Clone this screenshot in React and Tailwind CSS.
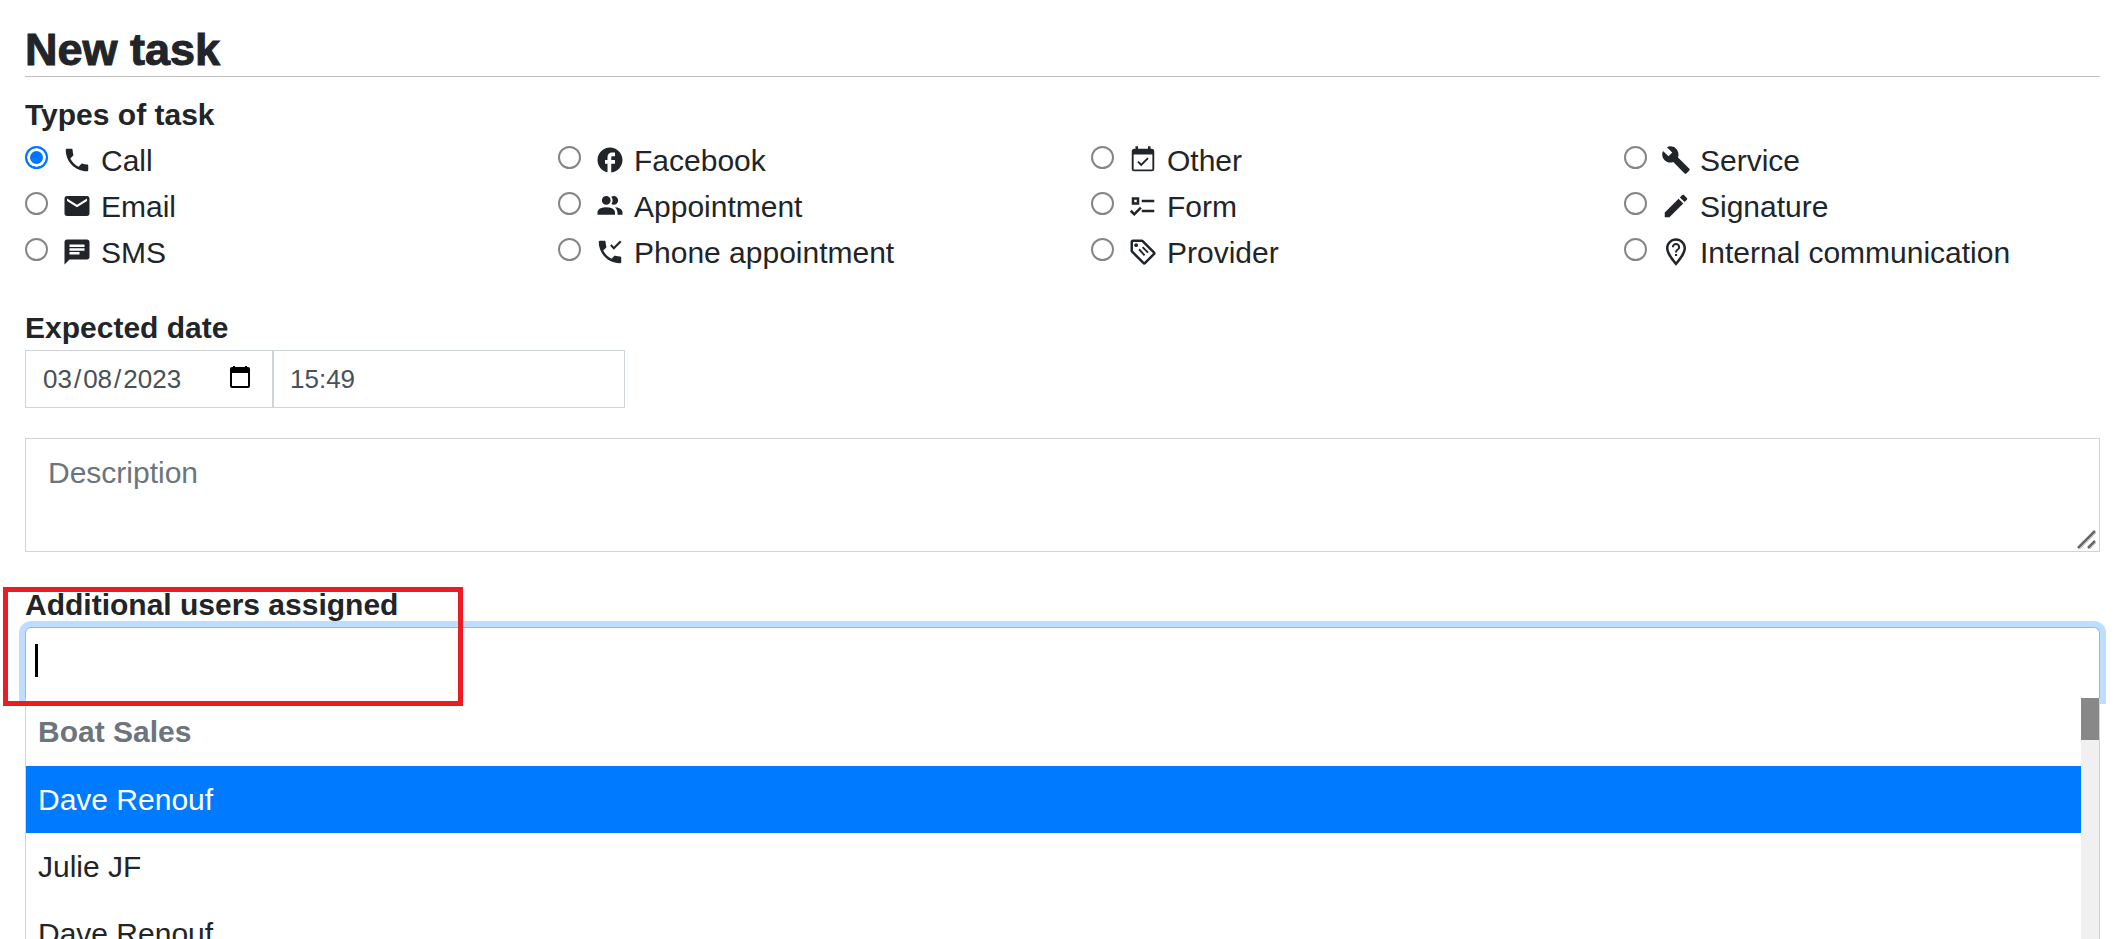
import { useState } from "react";
import { MdPhone, MdEmail, MdChat, MdFacebook, MdBuild, MdEdit } from "react-icons/md";

const Glyph = ({ children, ...rest }) => (
  <svg viewBox="0 0 24 24" fill="currentColor" aria-hidden="true" {...rest}>
    {children}
  </svg>
);

const PeopleIcon = (props) => (
  <Glyph {...props}>
    <path d="M16 17v2H2v-2s0-4 7-4 7 4 7 4m-3.500-9.500A3.500 3.500 0 1 0 9 11a3.500 3.500 0 0 0 3.500-3.500m3.440 5.500A5.320 5.320 0 0 1 18 17v2h4v-2s0-3.630-6.060-4M15 4a3.390 3.390 0 0 0-1.930.590 5 5 0 0 1 0 5.820A3.390 3.390 0 0 0 15 11a3.500 3.500 0 0 0 0-7z" />
  </Glyph>
);

const PhoneCheckIcon = (props) => (
  <Glyph {...props}>
    <path d="M20 15.500c-1.200 0-2.500-.2-3.600-.6h-.3c-.3 0-.5.1-.7.3l-2.200 2.200c-2.800-1.500-5.200-3.800-6.600-6.600l2.200-2.200c.3-.3.4-.7.2-1-.3-1.100-.5-2.400-.5-3.600 0-.5-.5-1-1-1H4c-.5 0-1 .5-1 1 0 9.400 7.600 17 17 17 .5 0 1-.5 1-1v-3.500c0-.5-.5-1-1-1M15 10.200l-2.900-3.200 1.200-1.200 1.700 1.900 5-5 1.200 1.200z" />
  </Glyph>
);

const CalendarCheckIcon = (props) => (
  <Glyph {...props}>
    <path d="M19 3h-1V1h-2v2H8V1H6v2H5c-1.100 0-2 .9-2 2v14a2 2 0 0 0 2 2h14a2 2 0 0 0 2-2V5a2 2 0 0 0-2-2m0 16.500H4.500V7.500h15v12M16.530 11.060 15.470 10l-4.880 4.880-2.120-2.120-1.060 1.060L10.590 17z" />
  </Glyph>
);

const ChecklistIcon = (props) => (
  <Glyph {...props}>
    <path d="M3 5h6v6H3V5m2 2v2h2V7H5m6 0h10v2H11V7m0 8h10v2H11v-2m-6 5-3.500-3.500 1.410-1.410L5 17.170l4.590-4.580L11 14z" />
  </Glyph>
);

const TagTextIcon = (props) => (
  <Glyph {...props}>
    <path d="M21.410 11.580l-9-9A2 2 0 0 0 11 2H4a2 2 0 0 0-2 2v7a2 2 0 0 0 .590 1.420l9 9a2 2 0 0 0 2.820 0l7-7a2 2 0 0 0 0-2.840M13 20l-9-9V4h7l9 9z" />
    <circle cx="6.500" cy="6.500" r="1.500" />
    <path d="M11.100 8.600l1.100-1.100 4.400 4.400-1.100 1.100zM8.300 10.300l1.100-1.100 4.400 4.900-1.100 1.100z" />
  </Glyph>
);

const PinQuestionIcon = (props) => (
  <Glyph {...props}>
    <path d="M12 1C7.600 1 4 4.600 4 9c0 5.600 8 14 8 14s8-8.400 8-14c0-4.400-3.600-8-8-8m0 18.900C10 17.300 6 12.500 6 9c0-3.300 2.700-6 6-6s6 2.700 6 6c0 3.500-4 8.300-6 10.900" />
    <path d="M11.200 13.500h1.700v1.700h-1.700zM12 4.800a3.300 3.300 0 0 0-3.300 3.300h1.600a1.700 1.700 0 1 1 3.400 0c0 1.600-2.500 1.500-2.500 4.200h1.600c0-1.800 2.500-2 2.500-4.200A3.300 3.300 0 0 0 12 4.800z" />
  </Glyph>
);

const ResizeIcon = (props) => (
  <svg viewBox="0 0 22 22" fill="none" aria-hidden="true" {...props}>
    <path d="M1 19 18 2M11 19l7-7" stroke="#666" strokeWidth="2.500" />
    <path d="M3 20 19 4M13 20l6-6" stroke="#ccc" strokeWidth="1" />
  </svg>
);

const CalendarIcon = (props) => (
  <svg viewBox="0 0 20 22" fill="#000" aria-hidden="true" {...props}>
    <path d="M3 0h2v1h10V0h2v1h1a2 2 0 0 1 2 2v17a2 2 0 0 1-2 2H2a2 2 0 0 1-2-2V3a2 2 0 0 1 2-2h1zM2 7v13h16V7z" />
  </svg>
);

// Listed column by column
const TASK_TYPES = [
  { id: "call", label: "Call", icon: MdPhone },
  { id: "email", label: "Email", icon: MdEmail },
  { id: "sms", label: "SMS", icon: MdChat },
  { id: "facebook", label: "Facebook", icon: MdFacebook },
  { id: "appointment", label: "Appointment", icon: PeopleIcon },
  { id: "phone-appointment", label: "Phone appointment", icon: PhoneCheckIcon },
  { id: "other", label: "Other", icon: CalendarCheckIcon },
  { id: "form", label: "Form", icon: ChecklistIcon },
  { id: "provider", label: "Provider", icon: TagTextIcon },
  { id: "service", label: "Service", icon: MdBuild },
  { id: "signature", label: "Signature", icon: MdEdit },
  { id: "internal", label: "Internal communication", icon: PinQuestionIcon },
];

const USERS = ["Dave Renouf", "Julie JF", "Dave Renouf"];

function TaskTypes() {
  const [type, setType] = useState("call");

  return (
    <fieldset className="mt-4">
      <legend className="pb-0.5 leading-[43px] font-bold">Types of task</legend>
      <div className="grid grid-flow-col grid-cols-4 grid-rows-3 gap-x-[57px]">
        {TASK_TYPES.map(({ id, label, icon: Icon }) => (
          <label key={id} className="flex items-start leading-[46px] whitespace-nowrap">
            <input
              type="radio"
              name="task-type"
              value={id}
              checked={type === id}
              onChange={() => setType(id)}
              className="mt-2 mr-[14px] size-[23px] shrink-0 appearance-none rounded-full border-2 border-[#858585] bg-white checked:border-[#0075ff] checked:bg-[#0075ff] checked:shadow-[inset_0_0_0_3px_#fff]"
            />
            <Icon className="mt-[7px] mr-[9px] size-[30px] shrink-0" />
            {label}
          </label>
        ))}
      </div>
    </fieldset>
  );
}

function UserPicker() {
  const [active, setActive] = useState(0);

  return (
    <section className="relative mt-[30px] flex min-h-0 flex-1 flex-col">
      <label htmlFor="users" className="block font-bold">Additional users assigned</label>
      <div className="relative h-[71px] shrink-0 rounded-t-md border border-b-0 border-[#80bdff] bg-white shadow-[0_0_0_6px_rgba(0,123,255,0.25)]">
        <input
          id="users"
          type="text"
          autoComplete="off"
          className="h-full w-full bg-transparent px-[9px] caret-transparent outline-none"
        />
        <span className="absolute top-4 left-[9px] h-[33px] w-[3px] bg-black" />
      </div>

      {/* Suggestions */}
      <div className="relative flex min-h-0 flex-1 border-x border-[#ced4da] bg-white">
        <ul role="listbox" aria-label="Users" className="min-w-0 flex-1 overflow-hidden leading-[67px]">
          <li className="h-[68px] px-3 font-bold text-[#6c757d]">Boat Sales</li>
          {USERS.map((name, i) => (
            <li
              key={i}
              role="option"
              aria-selected={i === active}
              onMouseEnter={() => setActive(i)}
              className={`h-[67px] px-3 ${i === active ? "bg-[#007bff] text-white" : ""}`}
            >
              {name}
            </li>
          ))}
        </ul>
        <div className="w-[18px] bg-[#f0f0f0]">
          <div className="h-[42px] bg-[#888]" />
        </div>
      </div>

      {/* Highlight frame */}
      <div className="pointer-events-none absolute top-[5px] left-[-22px] h-[119px] w-[460px] border-5 border-[#ed1c24]" />
    </section>
  );
}

export default function App() {
  return (
    <main className="flex h-screen flex-col overflow-hidden bg-white pt-[26px] pr-[17px] pl-[25px] font-['Liberation_Sans',Arial,sans-serif] text-[30px] leading-[45px] text-[#212529]">
      <h1 className="border-b border-[#bfbfbf] pb-0.5 text-[45px] leading-[48px] font-bold [-webkit-text-stroke:1px_#212529]">
        New task
      </h1>

      <TaskTypes />

      <div className="mt-[29px]">
        <label htmlFor="date" className="block font-bold">Expected date</label>
        <div className="flex text-[26px] text-[#495057]">
          <div className="relative">
            <input
              id="date"
              type="date"
              defaultValue="2023-03-08"
              className="h-[58px] w-[248px] border border-[#ced4da] px-4 outline-none [&::-webkit-calendar-picker-indicator]:opacity-0 [&::-webkit-datetime-edit-text]:px-px"
            />
            <CalendarIcon className="pointer-events-none absolute top-4 right-[23px] h-[22px] w-5" />
          </div>
          <input
            type="text"
            aria-label="Expected time"
            defaultValue="15:49"
            className="h-[58px] w-[352px] border border-[#ced4da] px-4 outline-none"
          />
        </div>
      </div>

      <div className="relative mt-[30px]">
        <textarea
          aria-label="Description"
          placeholder="Description"
          className="block h-[114px] w-full resize-none border border-[#ced4da] px-[22px] py-[11px] outline-none placeholder:text-[#6c757d]"
        />
        <ResizeIcon className="pointer-events-none absolute right-px bottom-px size-[22px]" />
      </div>

      <UserPicker />
    </main>
  );
}
